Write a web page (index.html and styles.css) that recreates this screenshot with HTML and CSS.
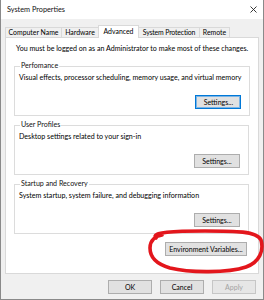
FILE: index.html
```html
<!DOCTYPE html>
<html>
<head>
<meta charset="utf-8">
<link rel="stylesheet" href="styles.css">
</head>
<body>
<div class="window">
  <div class="titlebar">
    <span class="title">System Properties</span>
    <svg class="close" width="7" height="7" viewBox="0 0 7 7"><path d="M0.5 0.5 L6.5 6.5 M6.5 0.5 L0.5 6.5" stroke="#222" stroke-width="0.9" fill="none"/></svg>
  </div>
  <div class="client">
    <div class="tabs">
      <div class="tab tab-cn">Computer Name</div>
      <div class="tab tab-hw">Hardware</div>
      <div class="tab tab-adv active">Advanced</div>
      <div class="tab tab-sp">System Protection</div>
      <div class="tab tab-rm">Remote</div>
    </div>
    <div class="panel">
      <p class="note">You must be logged on as an Administrator to make most of these changes.</p>
      <fieldset class="group">
        <legend>Perfomance</legend>
        <p class="desc">Visual effects, processor scheduling, memory usage, and virtual memory</p>
        <div class="actions"><button class="btn default">Settings...</button></div>
      </fieldset>
      <fieldset class="group">
        <legend>User Profiles</legend>
        <p class="desc">Desktop settings related to your sign-in</p>
        <div class="actions"><button class="btn">Settings...</button></div>
      </fieldset>
      <fieldset class="group">
        <legend>Startup and Recovery</legend>
        <p class="desc">System startup, system failure, and debugging information</p>
        <div class="actions"><button class="btn">Settings...</button></div>
      </fieldset>
      <div class="env-row"><button class="btn env">Environment Variables...</button></div>
    </div>
    <div class="footer">
      <button class="btn foot">OK</button>
      <button class="btn foot">Cancel</button>
      <button class="btn foot disabled">Apply</button>
    </div>
  </div>
  <svg class="annotation" width="264" height="300" viewBox="0 0 264 300">
    <path d="M156 238 C 150 232, 175 231, 205 231 C 235 231, 257 231, 261 240 C 264 250, 260 262, 246 267 C 228 273, 190 273, 170 268 C 156 264, 150 257, 150 248 C 150 240, 156 236, 162 235" stroke="#e3161c" stroke-width="3.6" fill="none" stroke-linecap="round"/>
  </svg>
</div>
</body>
</html>
```
FILE: styles.css
```css
* { box-sizing: border-box; margin: 0; padding: 0; }
html, body { margin: 0; background: #fff; }
body {
  width: 264px;
  height: 300px;
  overflow: hidden;
  font-family: Lato, "Liberation Sans", sans-serif;
  font-size: 7.1px;
  color: #000;
}
.window {
  position: relative;
  width: 264px;
  height: 300px;
  border: 1px solid #8a8a8a;
  border-top: none;
  background: #f0f0f0;
  display: flex;
  flex-direction: column;
}
.titlebar {
  height: 19px;
  background: #fff;
  display: flex;
  align-items: center;
  justify-content: space-between;
  padding: 0 6px 0 6px;
  font-size: 7.3px;
  color: #111;
}
.close { display: block; }
.client {
  flex: 1;
  display: flex;
  flex-direction: column;
  padding: 6px 4px 0 4px;
}
.tabs {
  display: flex;
  height: 12px;
  align-items: flex-end;
  position: relative;
  z-index: 1;
}
.tab {
  height: 10px;
  line-height: 9px;
  border: 1px solid #d9d9d9;
  border-bottom: none;
  border-right: none;
  background: #f0f0f0;
  white-space: nowrap;
  text-align: center;
  font-size: 6.9px;
}
.tab-cn { width: 56px; }
.tab-hw { width: 37px; }
.tab-adv { width: 41px; }
.tab-sp { width: 60px; letter-spacing: -0.15px; }
.tab-rm { width: 31px; border-right: 1px solid #d9d9d9; }
.tab.active {
  height: 13px;
  margin-bottom: -1px;
  line-height: 11px;
  background: #fff;
  border-right: 1px solid #d9d9d9;
  position: relative;
  z-index: 2;
}
.tab.active + .tab { border-left: none; }
.panel {
  height: 237px;
  background: #fff;
  border: 1px solid #d9d9d9;
  padding: 6px 9px 0 8px;
  display: flex;
  flex-direction: column;
}
.note { line-height: 10px; padding-left: 2px; white-space: nowrap; }
.group {
  border: 1px solid #dcdcdc;
  margin-top: 7px;
  padding: 2px 8px 5px 4px;
  height: 55px;
}
.group + .group { margin-top: 4px; }
.group legend {
  line-height: 10px;
  padding: 0 1px;
  margin-left: 1px;
  color: #111;
}
.desc { line-height: 10px; white-space: nowrap; }
.actions {
  display: flex;
  justify-content: flex-end;
  margin-top: 12px;
}
.btn {
  font-family: inherit;
  font-size: 7px;
  color: #000;
  background: #e1e1e1;
  border: 1px solid #adadad;
  height: 14px;
  line-height: 12px;
  padding: 0 3px;
  white-space: nowrap;
}
.btn.default { border-color: #0078d7; box-shadow: inset 0 0 0 1px #7ab4e6; }
.actions .btn { width: 46px; }
.env-row {
  display: flex;
  justify-content: flex-end;
  margin-top: 8px;
  padding-right: 2px;
}
.btn.env { width: 82px; }
.footer {
  display: flex;
  justify-content: flex-end;
  gap: 8px;
  padding: 6px 3px 0 0;
}
.btn.foot { width: 44px; }
.btn.disabled { color: #a3a3a3; border-color: #c6c6c6; background: #e6e6e6; }
.annotation {
  position: absolute;
  left: -1px;
  top: 0;
  pointer-events: none;
}
```
